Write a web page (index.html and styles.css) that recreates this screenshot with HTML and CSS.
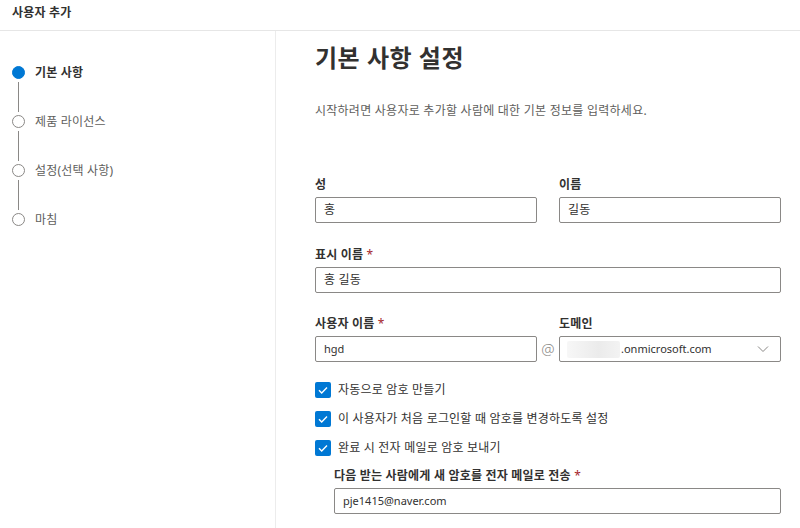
FILE: index.html
```html
<!DOCTYPE html>
<html lang="ko">
<head>
<meta charset="utf-8">
<title>사용자 추가</title>
<link rel="stylesheet" href="styles.css">
</head>
<body>
<header class="topbar">사용자 추가</header>
<div class="main">
  <nav class="steps">
    <div class="step active"><span class="dot"></span><span class="step-label">기본 사항</span></div>
    <div class="connector"></div>
    <div class="step"><span class="dot"></span><span class="step-label">제품 라이선스</span></div>
    <div class="connector"></div>
    <div class="step"><span class="dot"></span><span class="step-label">설정(선택 사항)</span></div>
    <div class="connector"></div>
    <div class="step"><span class="dot"></span><span class="step-label">마침</span></div>
  </nav>
  <section class="panel">
    <h1 class="title">기본 사항 설정</h1>
    <p class="subtitle">시작하려면 사용자로 추가할 사람에 대한 기본 정보를 입력하세요.</p>

    <div class="row row-name">
      <div class="field">
        <label class="label">성</label>
        <div class="input">홍</div>
      </div>
      <div class="field">
        <label class="label">이름</label>
        <div class="input">길동</div>
      </div>
    </div>

    <div class="field field-display">
      <label class="label">표시 이름 <span class="req">*</span></label>
      <div class="input">홍 길동</div>
    </div>

    <div class="row row-user">
      <div class="field">
        <label class="label">사용자 이름 <span class="req">*</span></label>
        <div class="input latin">hgd</div>
      </div>
      <div class="at">@</div>
      <div class="field">
        <label class="label">도메인</label>
        <div class="input select">
          <span class="blur"></span><span class="domain latin">.onmicrosoft.com</span>
          <svg class="chev" width="12" height="8" viewBox="0 0 12 8"><path d="M1 1.5 L6 6.5 L11 1.5" fill="none" stroke="#8a8886" stroke-width="1"/></svg>
        </div>
      </div>
    </div>

    <div class="checks">
      <div class="check"><span class="box"><svg width="16" height="16" viewBox="0 0 16 16"><path d="M4 8.3 L6.7 11 L12 5.6" fill="none" stroke="#fff" stroke-width="1.4"/></svg></span><span>자동으로 암호 만들기</span></div>
      <div class="check"><span class="box"><svg width="16" height="16" viewBox="0 0 16 16"><path d="M4 8.3 L6.7 11 L12 5.6" fill="none" stroke="#fff" stroke-width="1.4"/></svg></span><span>이 사용자가 처음 로그인할 때 암호를 변경하도록 설정</span></div>
      <div class="check"><span class="box"><svg width="16" height="16" viewBox="0 0 16 16"><path d="M4 8.3 L6.7 11 L12 5.6" fill="none" stroke="#fff" stroke-width="1.4"/></svg></span><span>완료 시 전자 메일로 암호 보내기</span></div>
    </div>

    <div class="field field-email">
      <label class="label">다음 받는 사람에게 새 암호를 전자 메일로 전송 <span class="req">*</span></label>
      <div class="input latin">pje1415@naver.com</div>
    </div>
  </section>
</div>
</body>
</html>
```

FILE: styles.css
```css
* { box-sizing: border-box; }
html, body { margin: 0; padding: 0; background: #fff; }
body {
  width: 800px;
  height: 528px;
  overflow: hidden;
  font-family: "Noto Sans", "Noto Sans CJK KR", sans-serif;
  font-size: 12px;
  letter-spacing: 0.2px;
  color: #323130;
}
.topbar {
  height: 31px;
  border-bottom: 1px solid #e6e6e6;
  padding: 5px 0 0 12px;
  font-size: 12px;
  font-weight: 600;
  line-height: 16px;
}
.main { display: flex; height: 497px; }
.steps {
  width: 276px;
  border-right: 1px solid #ececec;
  padding: 35px 0 0 12px;
  display: flex;
  flex-direction: column;
}
.step { display: flex; align-items: center; gap: 10px; height: 13px; }
.dot {
  width: 13px; height: 13px; border-radius: 50%;
  border: 1.5px solid #8a8886; background: #fff; flex: none;
}
.step.active .dot { background: #0078d4; border-color: #0078d4; }
.step-label { color: #605e5c; font-size: 12px; line-height: 16px; }
.step.active .step-label { color: #323130; font-weight: 700; }
.connector { width: 1px; height: 30px; margin: 3px 0 3px 6px; background: #8a8886; }

.panel { flex: 1; padding: 11px 19px 0 39px; }
.title { margin: 0; font-size: 24px; line-height: 32px; font-weight: 700; color: #323130; letter-spacing: 0.5px; }
.subtitle { margin: 29px 0 0; line-height: 16px; color: #605e5c; letter-spacing: 0.25px; }
.label { display: block; font-weight: 700; line-height: 16px; margin-bottom: 4px; }
.req { color: #a4262c; font-weight: 400; }
.input {
  height: 26px;
  border: 1px solid #8a8886;
  border-radius: 2px;
  padding: 0 8px;
  display: flex;
  align-items: center;
  line-height: 16px;
  color: #323130;
}
.latin { font-size: 11px; letter-spacing: 0; }
.row { display: grid; grid-template-columns: 1fr 22px 1fr; }
.row-name .field:nth-child(2) { grid-column: 3; }
.row-name { margin-top: 58px; }
.field-display { margin-top: 24px; }
.row-user { margin-top: 23px; }
.at { align-self: end; height: 26px; display: flex; align-items: center; justify-content: center; color: #8a8886; font-size: 15px; font-weight: 300; }
.select { position: relative; padding-left: 7px; }
.blur {
  width: 53px; height: 17px; flex: none;
  background: linear-gradient(90deg, #f7f7f7, #ebebeb 60%, #f3f3f3);
  border-radius: 2px;
}
.domain { margin-left: 1px; }
.chev { margin-left: auto; margin-right: 3px; }
.checks { margin-top: 20px; display: flex; flex-direction: column; gap: 13px; }
.check { display: flex; align-items: center; gap: 7px; height: 16px; line-height: 16px; }
.box { width: 16px; height: 16px; border-radius: 2px; background: #0078d4; display: block; flex: none; }
.box svg { display: block; }
.field-email { margin: 12px 0 0 19px; }
```
